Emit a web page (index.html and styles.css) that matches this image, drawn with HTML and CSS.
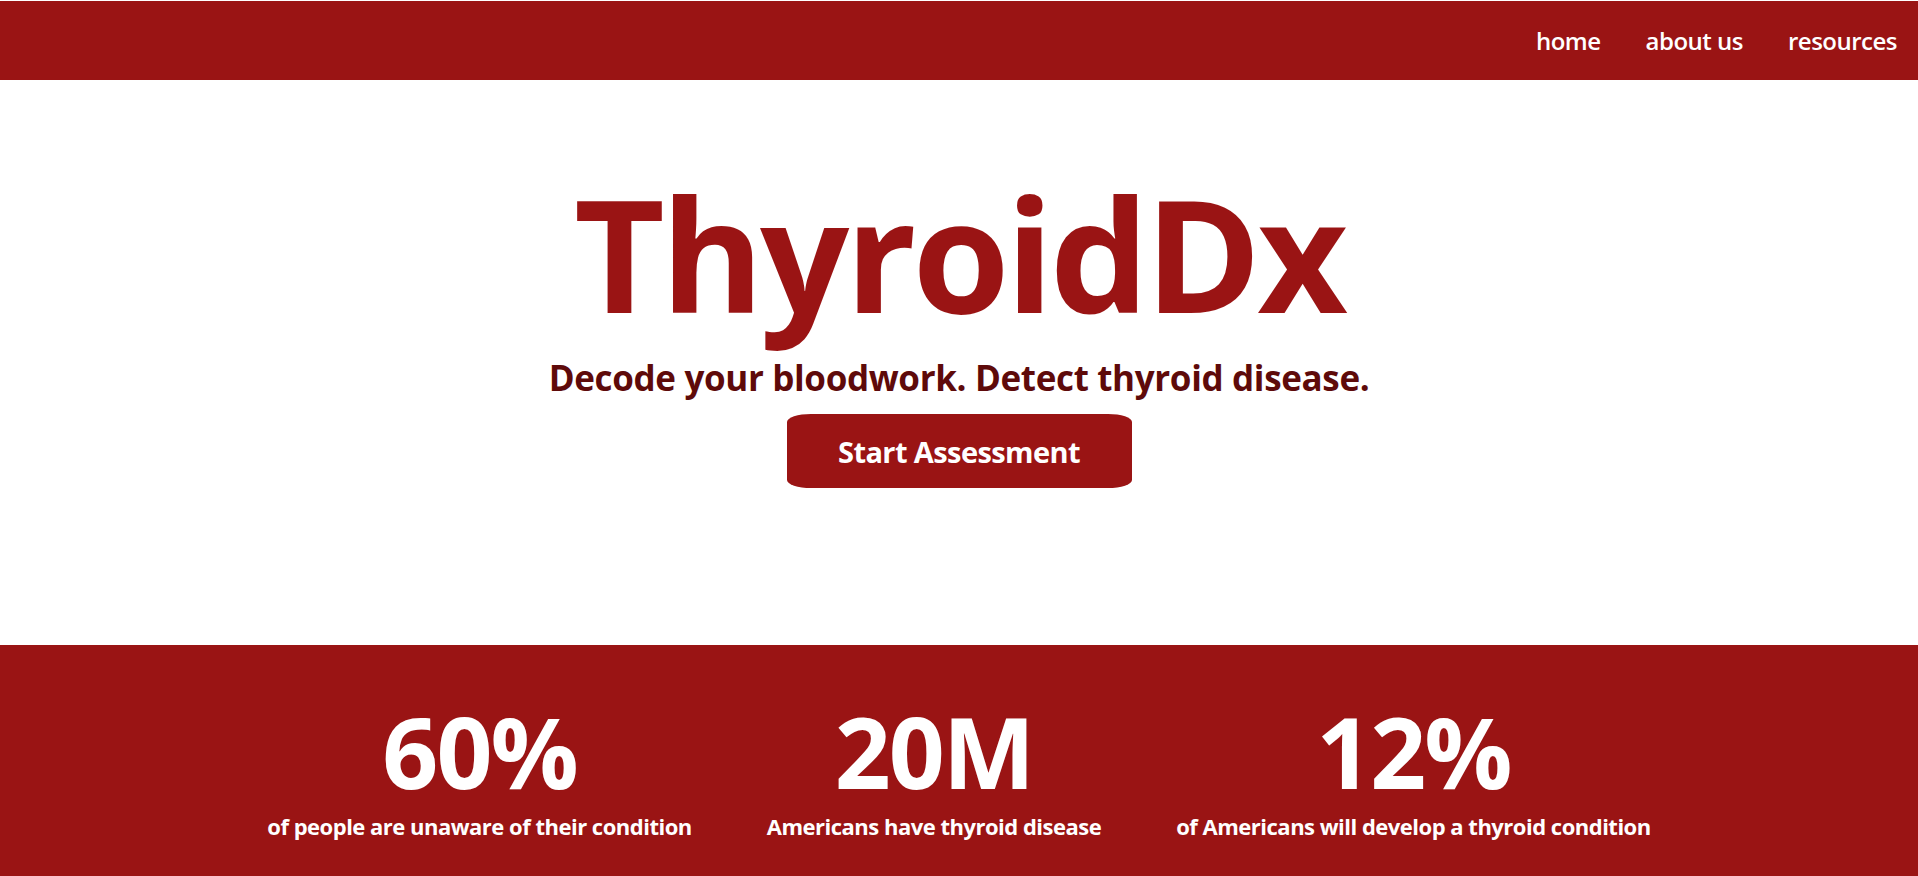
FILE: index.html
```html
<!DOCTYPE html>
<html lang="en">
<head>
<meta charset="utf-8">
<title>ThyroidDx</title>
<link rel="stylesheet" href="styles.css">
</head>
<body>
<nav class="topbar">
  <a class="nav-link" href="#">home</a>
  <a class="nav-link" href="#">about us</a>
  <a class="nav-link" href="#">resources</a>
</nav>
<main class="hero">
  <h1 class="hero-title">ThyroidDx</h1>
  <p class="hero-sub">Decode your bloodwork. Detect thyroid disease.</p>
  <a class="hero-btn" href="#">Start Assessment</a>
</main>
<section class="stats">
  <div class="stat">
    <div class="stat-num">60%</div>
    <div class="stat-label">of people are unaware of their condition</div>
  </div>
  <div class="stat">
    <div class="stat-num">20M</div>
    <div class="stat-label">Americans have thyroid disease</div>
  </div>
  <div class="stat">
    <div class="stat-num">12%</div>
    <div class="stat-label">of Americans will develop a thyroid condition</div>
  </div>
</section>
</body>
</html>
```
FILE: styles.css
```css
* { box-sizing: border-box; }
html, body { margin: 0; padding: 0; }
body {
  font-family: "Open Sans", "Noto Sans", sans-serif;
  background: #ffffff;
  color: #9a1414;
}
.topbar {
  margin-top: 1px;
  height: 79px;
  background: #9a1414;
  display: flex;
  justify-content: flex-end;
  align-items: center;
  gap: 45px;
  padding-right: 21px;
}
.nav-link {
  color: #ffffff;
  text-decoration: none;
  font-size: 24px;
  font-weight: 600;
  letter-spacing: -0.5px;
}
.hero {
  height: 565px;
  display: flex;
  flex-direction: column;
  align-items: center;
  padding-top: 94px;
}
.hero-title {
  margin: 0;
  font-size: 157px;
  font-weight: 700;
  line-height: 1;
  color: #9a1414;
  letter-spacing: -4px;
}
.hero-sub {
  margin: 26px 0 0;
  font-size: 35px;
  font-weight: 700;
  line-height: 1.2;
  color: #5e0a0a;
  letter-spacing: -0.35px;
}
.hero-btn {
  margin-top: 15px;
  width: 345px;
  height: 74px;
  display: flex;
  align-items: center;
  justify-content: center;
  background: #9a1414;
  color: #ffffff;
  text-decoration: none;
  font-size: 29px;
  font-weight: 700;
  letter-spacing: -0.6px;
  border-radius: 24px / 8px;
}
.stats {
  background: #9a1414;
  height: 231px;
  display: flex;
  justify-content: center;
  gap: 75px;
  padding-top: 50px;
}
.stat {
  display: flex;
  flex-direction: column;
  align-items: center;
  color: #ffffff;
}
.stat-num {
  font-size: 98px;
  font-weight: 700;
  line-height: 1.16;
  letter-spacing: -2px;
}
.stat-label {
  margin-top: 3px;
  font-size: 22px;
  font-weight: 700;
  line-height: 1.3;
  letter-spacing: -0.5px;
}
```
